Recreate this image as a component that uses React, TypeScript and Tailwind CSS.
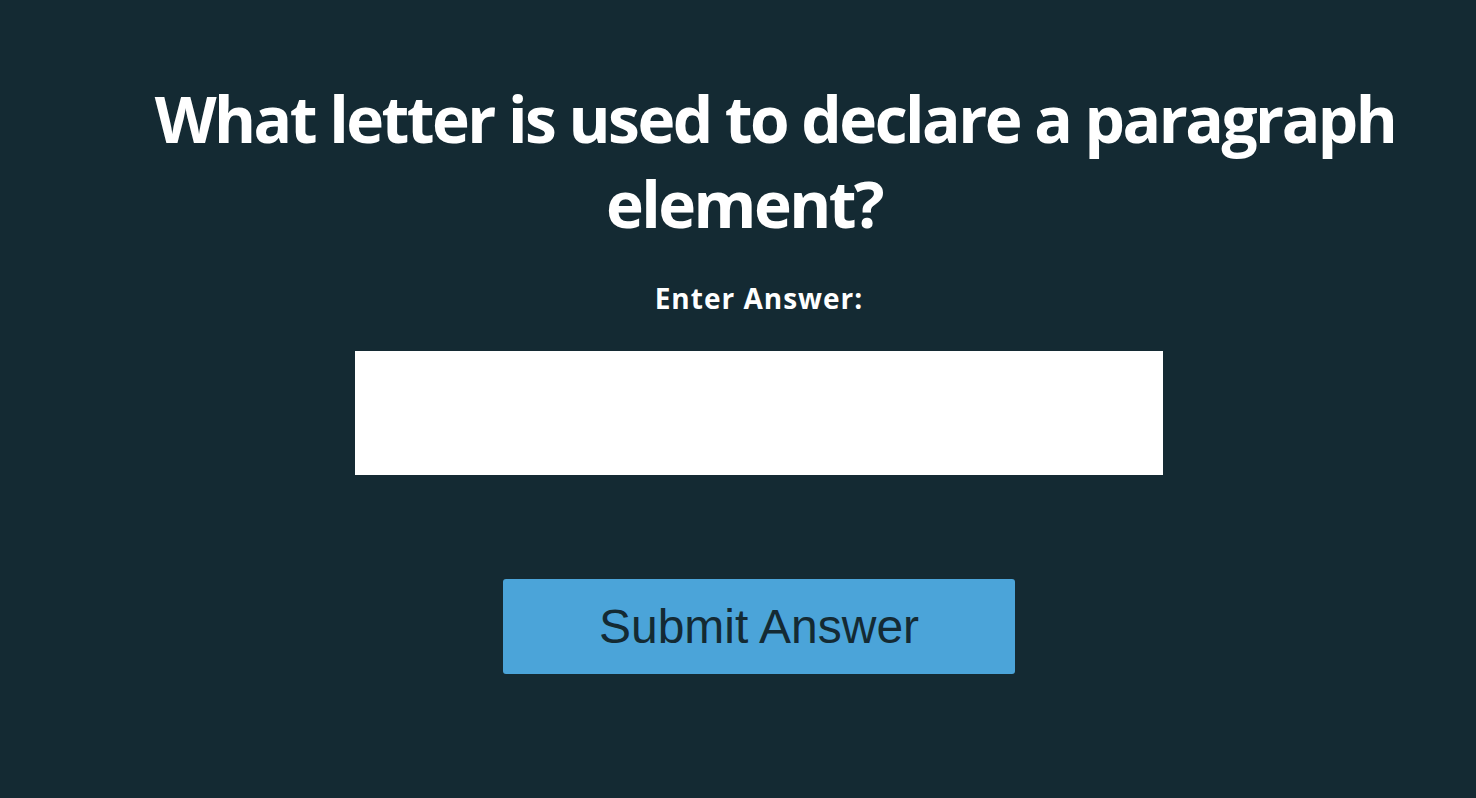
export default function App() {
  return (
    <div className="min-h-screen w-full bg-[#142a33] text-white">
      <div className="pl-[12px] pt-[76px]">
        <h1 className="text-center indent-[62px] text-[64px] leading-[85px] font-bold font-['Open_Sans',sans-serif] tracking-[-2.5px]">
          What letter is used to declare a paragraph
          <br />
          element?
        </h1>
      </div>
      <div className="pl-[42px] flex flex-col items-center">
        <label
          htmlFor="answer"
          className="mt-[34px] text-[28px] leading-[36px] font-bold font-['Open_Sans',sans-serif] tracking-[1px]"
        >
          Enter Answer:
        </label>
        <input
          id="answer"
          type="text"
          className="mt-[35px] w-[808px] h-[124px] bg-white text-black border-0 outline-none px-4 text-[32px]"
        />
        <button
          type="button"
          className="mt-[104px] w-[512px] h-[95px] rounded-[3px] bg-[#4ba4d9] text-[#142a33] text-[48px] font-['Liberation_Sans',Arial,sans-serif]"
        >
          Submit Answer
        </button>
      </div>
    </div>
  );
}
